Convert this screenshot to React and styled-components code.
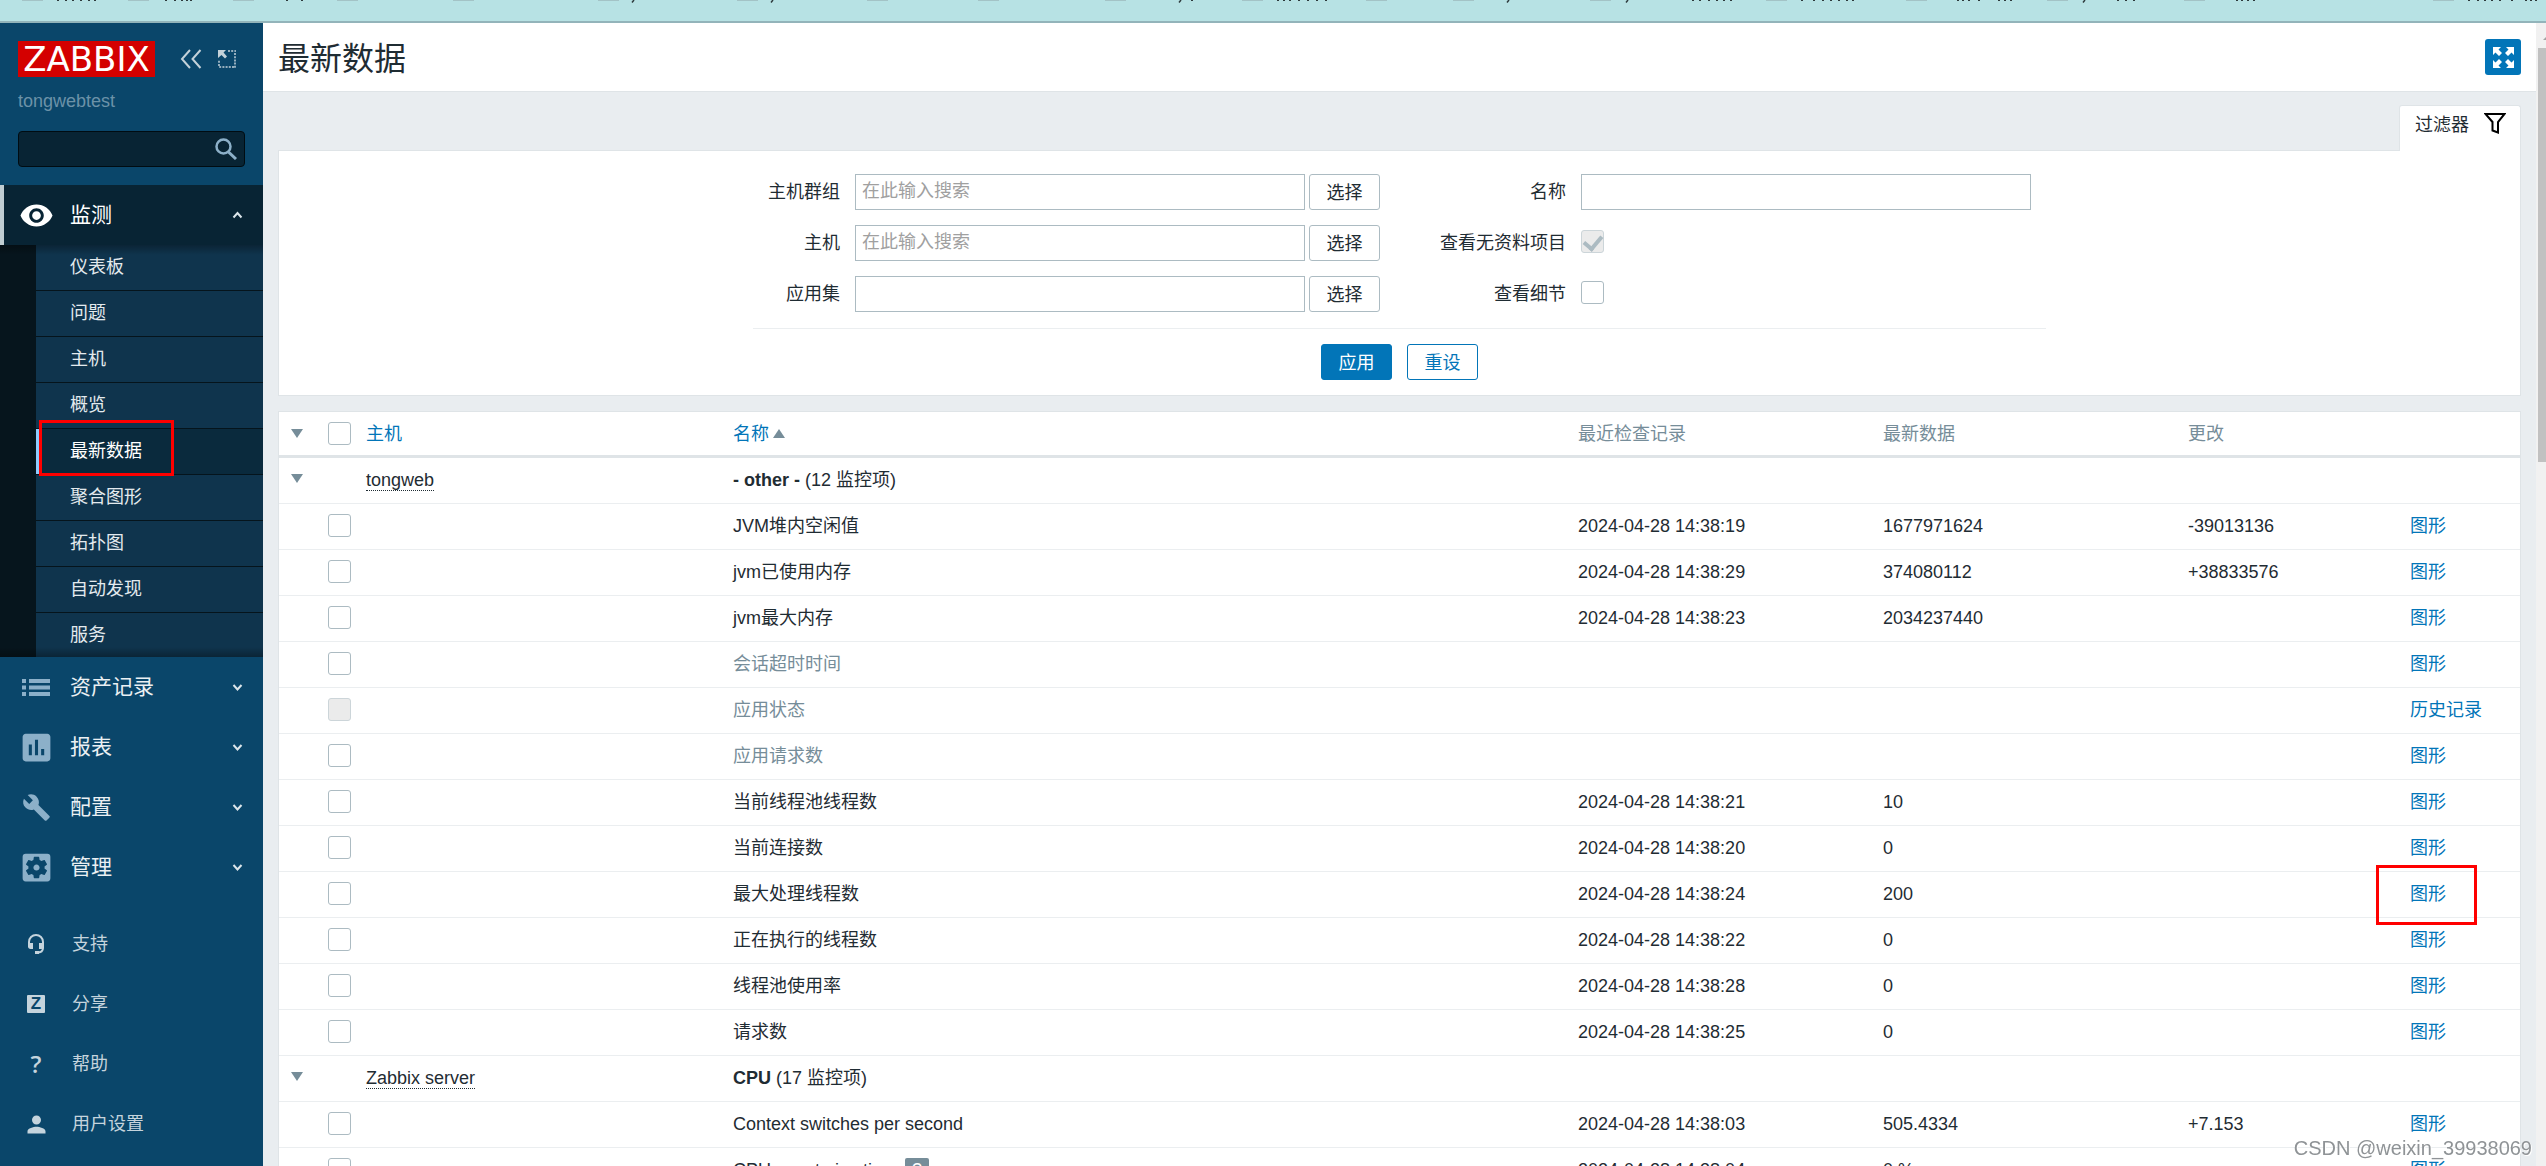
import React from 'react';
import styled, { createGlobalStyle } from 'styled-components';
import { MdVisibility, MdAssessment, MdBuild, MdSettingsApplications, MdPerson } from 'react-icons/md';

const GlobalStyle = createGlobalStyle`
  * {
    box-sizing: border-box;
  }

  body {
    margin: 0;
    background: #e9edf0;
    color: #1f2c33;
    font-family: "Liberation Sans", Arial, "Noto Sans CJK SC", sans-serif;
    font-size: 18px;
    line-height: 24px;
  }

  a {
    color: #0275b8;
    text-decoration: none;
  }

  button,
  input {
    font: inherit;
    margin: 0;
  }

  svg {
    display: block;
    flex: none;
  }
`

const Page = styled.div`
  display: flex;
  flex-direction: column;
  height: 100vh;
  overflow: hidden;
`

const BookmarkBar = styled.div`
  display: flex;
  flex: none;
  height: 23px;
  padding-left: 22px;
  overflow: hidden;
  background: #b7e2e4;
  border-bottom: 2px solid #93b4ba;
`

const Bookmark = styled.div`
  flex: none;
  width: ${props => props.$width}px;
`

const Window = styled.div`
  display: flex;
  flex: 1;
  min-height: 0;
`

/* sidebar */

const Sidebar = styled.aside`
  flex: none;
  width: 263px;
  background: #0a466a;
  overflow: hidden;
`

const Brand = styled.div`
  display: flex;
  align-items: center;
  padding: 18px 18px 0;
  color: #c3d1d9;
`

const Logo = styled.a`
  width: 137px;
  height: 36px;
  background: #d40000;
  color: #fff;
  font-family: "DejaVu Sans", sans-serif;
  font-size: 34px;
  line-height: 36px;
  text-align: center;
`

const BrandButton = styled.button`
  padding: 0;
  border: 0;
  background: none;
  color: inherit;
  margin-left: ${props => props.$gap}px;
`

const ServerName = styled.div`
  padding: 12px 18px 0;
  color: #6c92a8;
`

const Search = styled.form`
  display: flex;
  align-items: center;
  height: 36px;
  margin: 18px 18px;
  padding-right: 7px;
  background: #082434;
  border: 1px solid #000c12;
  border-radius: 4px;
  color: #8cb0c9;
`

const SearchInput = styled.input`
  flex: 1;
  min-width: 0;
  border: 0;
  background: none;
  color: #fff;
  outline: none;
`

const MenuItem = styled.a`
  display: flex;
  align-items: center;
  gap: 20px;
  height: 60px;
  padding: 0 20px 0 22px;
  color: ${props => props.$open ? '#fff' : '#ebf0f3'};
  font-size: 21px;
  background: ${props => props.$open ? '#082434' : 'none'};
  box-shadow: ${props => props.$open ? 'inset 4px 0 #c0cdd2' : 'none'};
`

const IconSlot = styled.span`
  display: flex;
  flex: none;
  justify-content: center;
  width: 28px;
  color: ${props => props.$color || '#8cb0c9'};

  svg {
    margin: 0 -4px;
  }
`

const MenuLabel = styled.span`
  flex: 1;
`

const Submenu = styled.div`
  padding-left: 36px;
  background:
    linear-gradient(rgba(0, 0, 0, 0.3), transparent 10px, transparent calc(100% - 10px), rgba(0, 0, 0, 0.3)),
    linear-gradient(90deg, #06151d 36px, #0f344d 36px);
`

const SubmenuItem = styled.a`
  display: block;
  position: relative;
  height: 46px;
  padding-left: 34px;
  border-bottom: 1px solid #05141c;
  color: #e3eaee;
  line-height: 45px;

  &:last-child {
    height: 44px;
    border-bottom: 0;
  }

  ${props => props.$active && `
    color: #fff;
    background: #0a2a3d;
    box-shadow: inset 3px 0 #8ecbff;
  `}
`

const FooterMenu = styled.div`
  margin-top: 17px;
`

const FooterItem = styled.a`
  display: flex;
  align-items: center;
  gap: 22px;
  height: 60px;
  padding: 0 22px;
  color: #c5d4dd;
`

const ShareMark = styled.span`
  width: 18px;
  height: 18px;
  border-radius: 1px;
  background: #c5d4dd;
  color: #0a466a;
  font-size: 17px;
  font-weight: bold;
  line-height: 18px;
  text-align: center;
`

const HelpMark = styled.span`
  font-family: "Open Sans", sans-serif;
  font-size: 24px;
  font-weight: 600;
`

const Highlight = styled.span`
  position: absolute;
  border: 3px solid #f00;
  pointer-events: none;
  top: ${props => props.$top}px;
  left: ${props => props.$left}px;
  width: ${props => props.$width}px;
  height: ${props => props.$height}px;
`

/* content */

const Content = styled.main`
  flex: 1;
  min-width: 0;
  overflow: hidden;
`

const Header = styled.header`
  display: flex;
  align-items: center;
  justify-content: space-between;
  height: 69px;
  padding: 0 15px;
  background: #fff;
  border-bottom: 1px solid #dfe4e7;
`

const Title = styled.h1`
  margin: 0;
  padding-top: 3px;
  font-size: 32px;
  line-height: 36px;
  font-weight: normal;
`

const FullscreenButton = styled.button`
  display: flex;
  align-items: center;
  justify-content: center;
  width: 36px;
  height: 36px;
  padding: 0;
  border: 0;
  border-radius: 3px;
  background: #0275b8;
  color: #fff;
`

const Body = styled.div`
  padding: 13px 15px 0;
`

const Tabs = styled.div`
  display: flex;
  justify-content: flex-end;
`

const FilterTab = styled.button`
  display: flex;
  gap: 15px;
  height: 46px;
  margin-bottom: -1px;
  padding: 7px 14px 0 15px;
  border: 1px solid #dfe4e7;
  border-bottom: 0;
  border-radius: 3px 3px 0 0;
  background: #fff;
  color: #1f2c33;
`

const FilterPanel = styled.form`
  display: flex;
  flex-direction: column;
  align-items: center;
  padding: 23px 0 15px;
  margin-bottom: 15px;
  background: #fff;
  border: 1px solid #dfe4e7;
`

const FilterColumns = styled.div`
  display: flex;
  gap: 60px;
  padding: 0 15px 16px;
  border-bottom: 1px solid #ebeef0;
`

const FilterColumn = styled.div`
  display: grid;
  grid-template-columns: auto auto;
  grid-auto-rows: 36px;
  gap: 15px;
  align-items: center;
`

const Label = styled.label`
  text-align: right;
`

const Field = styled.div`
  display: flex;
  gap: 4px;
`

const CheckField = styled.div`
  padding-bottom: 4px;
`

const TextInput = styled.input`
  width: 450px;
  height: 36px;
  padding: 0 6px 2px;
  border: 1px solid #acbbc2;
  outline: none;

  &::placeholder {
    color: #a0a0a0;
  }
`

const Button = styled.button`
  width: 71px;
  height: 36px;
  padding: 2px 0 0;
  border: 1px solid ${props => props.$primary || props.$outline ? '#0275b8' : '#acbbc2'};
  border-radius: 3px;
  background: ${props => props.$primary ? '#0275b8' : '#fff'};
  color: ${props => props.$primary ? '#fff' : props.$outline ? '#0275b8' : '#1f2c33'};
`

const FilterActions = styled.div`
  display: flex;
  gap: 15px;
  padding-top: 15px;
`

const Checkbox = styled.input.attrs({ type: 'checkbox' })`
  appearance: none;
  display: block;
  width: 23px;
  height: 23px;
  border: 1px solid #acbbc2;
  border-radius: 3px;
  background: #fff;

  &:disabled {
    background: #ebebeb;
    border-color: #ccd5d9;
  }

  &:checked::after {
    content: "";
    display: block;
    width: 8px;
    height: 14px;
    margin: 1px auto 0;
    border: solid #acbbc2;
    border-width: 0 4px 4px 0;
    transform: rotate(40deg);
  }
`

const Table = styled.table`
  width: 100%;
  table-layout: fixed;
  border-collapse: separate;
  border-spacing: 0;
  background: #fff;
  border: 1px solid #dfe4e7;
`

const Col = styled.col`
  width: ${props => props.$width}px;
`

const HeadCell = styled.th`
  height: 46px;
  padding: 0 8px;
  border-bottom: 3px solid #dfe4e7;
  color: #768d99;
  font-weight: normal;
  text-align: left;

  &:first-child {
    padding-left: 12px;
  }
`

const Cell = styled.td`
  height: 46px;
  padding: 0 8px 2px;
  border-bottom: 1px solid #ebeef0;
  white-space: nowrap;
  color: ${props => props.$muted ? '#768d99' : 'inherit'};

  &:first-child {
    padding-left: 12px;
    padding-bottom: 4px;
  }
`

const ActionWrap = styled.div`
  position: relative;
`

const HostLink = styled.a`
  display: inline-block;
  color: #1f2c33;
  line-height: 20px;
  border-bottom: 1px dotted #1f2c33;
`

const ToggleButton = styled.button`
  display: block;
  padding: 0;
  border: 0;
  background: none;
`

const SortLink = styled.a`
  display: inline-flex;
  align-items: center;
  gap: 4px;
`

const Hint = styled.span`
  display: inline-block;
  width: 24px;
  margin-left: 8px;
  border-radius: 2px;
  background: #768d99;
  color: #fff;
  text-align: center;
`

const Scrollbar = styled.div`
  flex: none;
  width: 10px;
  padding-left: 2px;
  background: #f1f1f1;
  overflow: hidden;
`

const ScrollArrow = styled.div`
  height: 25px;
  padding: 13px 0 0 5px;
`

const ScrollThumb = styled.div`
  height: 414px;
  background: #c1c1c1;
`

const Watermark = styled.div`
  position: fixed;
  right: 14px;
  bottom: 6px;
  color: #8f9396;
  font-size: 20px;
  text-shadow: 1px 1px 0 #fff;
`

const bookmarks = [
  { width: 106, marks: [35, 43, 50, 58, 66, 72] },
  { width: 105, marks: [37, 46, 53, 58, 62] },
  { width: 104, marks: [53, 68] },
  { width: 116, marks: [] },
  { width: 145, marks: [] },
  { width: 139, marks: [], tail: 34 },
  { width: 130, marks: [], tail: 34 },
  { width: 111, marks: [] },
  { width: 127, marks: [] },
  { width: 137, marks: [86], tail: 74 },
  { width: 124, marks: [35, 41, 47, 56, 65, 74, 83] },
  { width: 87, marks: [] },
  { width: 137, marks: [], tail: 54 },
  { width: 176, marks: [102, 109, 118, 126, 133, 140], tail: 36 },
  { width: 140, marks: [35, 47, 56, 64, 72, 80, 86] },
  { width: 141, marks: [51, 56, 62, 72, 92, 98, 104] },
  { width: 137, marks: [70, 78, 86], tail: 36 },
  { width: 249, marks: [52, 57, 63, 69] },
  { width: 113, marks: [35, 44, 51, 58, 66, 78, 92, 97, 102] },
];

const submenu = ['仪表板', '问题', '主机', '概览', '最新数据', '聚合图形', '拓扑图', '自动发现', '服务'];

const tongwebItems = [
  { name: 'JVM堆内空闲值', time: '2024-04-28 14:38:19', value: '1677971624', change: '-39013136' },
  { name: 'jvm已使用内存', time: '2024-04-28 14:38:29', value: '374080112', change: '+38833576' },
  { name: 'jvm最大内存', time: '2024-04-28 14:38:23', value: '2034237440' },
  { name: '会话超时时间' },
  { name: '应用状态', disabled: true, action: '历史记录' },
  { name: '应用请求数' },
  { name: '当前线程池线程数', time: '2024-04-28 14:38:21', value: '10' },
  { name: '当前连接数', time: '2024-04-28 14:38:20', value: '0' },
  { name: '最大处理线程数', time: '2024-04-28 14:38:24', value: '200', marked: true },
  { name: '正在执行的线程数', time: '2024-04-28 14:38:22', value: '0' },
  { name: '线程池使用率', time: '2024-04-28 14:38:28', value: '0' },
  { name: '请求数', time: '2024-04-28 14:38:25', value: '0' },
];

const serverItems = [
  { name: 'Context switches per second', time: '2024-04-28 14:38:03', value: '505.4334', change: '+7.153' },
  { name: 'CPU guest nice time', hint: true, time: '2024-04-28 14:38:04', value: '0 %' },
];

const Triangle = ({ up }) => (
  <svg width="12" height="9" viewBox="0 0 12 9" fill="#768d99">
    <path d={up ? 'M0 9h12L6 0z' : 'M0 0h12L6 9z'} />
  </svg>
)

const Chevron = ({ up }) => (
  <svg width="11" height="8" viewBox="0 0 11 8" fill="none" stroke="#dbe5ea" strokeWidth="2">
    <path d={up ? 'M1.5 6.5l4-4.5 4 4.5' : 'M1.5 2l4 4.5 4-4.5'} />
  </svg>
)

const CollapseIcon = () => (
  <svg width="22" height="20" viewBox="0 0 22 20" fill="none" stroke="currentColor" strokeWidth="2">
    <path d="M10 1L2 10l8 9M20.500 1l-8 9 8 9" />
  </svg>
)

const KioskIcon = () => (
  <svg width="18" height="18" viewBox="0 0 18 18" fill="currentColor">
    <path d="M0 0h8L5.500 2.500l3.500 4L7 8.500 3.500 5 0 8z" />
    <path d="M10 1h8M17 3v15M16 17H0M1 16v-6" fill="none" stroke="currentColor" strokeWidth="1.500" strokeDasharray="2 1.200" />
  </svg>
)

const SearchIcon = () => (
  <svg width="22" height="22" viewBox="0 0 22 22" fill="none" stroke="currentColor">
    <circle cx="8.500" cy="8.500" r="7" strokeWidth="2.500" />
    <path d="M13.500 14l7.500 7" strokeWidth="3" />
  </svg>
)

const ListIcon = () => (
  <svg width="28" height="17" viewBox="0 0 28 17" fill="currentColor">
    <path d="M0 0h4v4H0zM7 0h21v4H7zM0 6.500h4v4H0zM7 6.500h21v4H7zM0 13h4v4H0zM7 13h21v4H7z" />
  </svg>
)

const HeadsetIcon = () => (
  <svg width="18" height="20" viewBox="0 0 18 20">
    <path d="M2 13V8a7 7 0 0 1 14 0v6c0 3-2 4.500-6 4.500" fill="none" stroke="currentColor" strokeWidth="2" />
    <path d="M1 9h5v6H3.500C2 15 1 14 1 12.500zM12 9h5v3.500c0 1.500-1 2.500-2.500 2.500H12zM8 17h4v3H8z" fill="currentColor" />
  </svg>
)

const FullscreenIcon = () => (
  <svg width="21" height="21" viewBox="0 0 21 21" fill="currentColor">
    {[0, 90, 180, 270].map(angle => (
      <path key={angle} transform={`rotate(${angle} 10.5 10.5)`} d="M0 0h8L5.500 2.500 9 6 6 9 2.500 5.500 0 8z" />
    ))}
  </svg>
)

const FunnelIcon = () => (
  <svg width="22" height="21" viewBox="0 0 22 21" fill="none" stroke="#000" strokeWidth="2">
    <path d="M1.500 1h19l-6.500 8v10.500l-5.500-2V9z" />
  </svg>
)

const BookmarkRemnant = ({ width, marks, tail }) => (
  <Bookmark $width={width}>
    <svg width={width} height="4">
      <rect width="21" height="1" fill="#a3c3c6" />
      {marks.map(x => <rect key={x} x={x} width="2" height="1" fill="#2d3a3c" />)}
      {tail && <path d={`M${tail + 2} 0l-2 2.500`} stroke="#2d3a3c" strokeWidth="1.500" />}
    </svg>
  </Bookmark>
)

const ItemRow = ({ item }) => (
  <tr>
    <Cell />
    <Cell><Checkbox aria-label={item.name} disabled={item.disabled} /></Cell>
    <Cell />
    <Cell $muted={!item.time}>{item.name}{item.hint && <Hint>?</Hint>}</Cell>
    <Cell>{item.time}</Cell>
    <Cell>{item.value}</Cell>
    <Cell>{item.change}</Cell>
    <Cell>
      <ActionWrap>
        <a href="#">{item.action || '图形'}</a>
        {item.marked && <Highlight $top={-17} $left={-34} $width={101} $height={60} />}
      </ActionWrap>
    </Cell>
  </tr>
)

const GroupRow = ({ host, name, count }) => (
  <tr>
    <Cell><ToggleButton type="button" aria-label={host}><Triangle /></ToggleButton></Cell>
    <Cell />
    <Cell><HostLink href="#">{host}</HostLink></Cell>
    <Cell colSpan="5"><b>{name}</b> ({count} 监控项)</Cell>
  </tr>
)

class App extends React.Component {
  renderSidebar() {
    return (
      <Sidebar>
        <Brand>
          <Logo href="#">ZABBIX</Logo>
          <BrandButton type="button" $gap={25}><CollapseIcon /></BrandButton>
          <BrandButton type="button" $gap={16}><KioskIcon /></BrandButton>
        </Brand>
        <ServerName>tongwebtest</ServerName>
        <Search>
          <SearchInput type="text" aria-label="search" />
          <SearchIcon />
        </Search>
        <nav>
          <MenuItem href="#" $open>
            <IconSlot $color="#fff"><MdVisibility size={35} /></IconSlot>
            <MenuLabel>监测</MenuLabel>
            <Chevron up />
          </MenuItem>
          <Submenu>
            {submenu.map(name => (
              <SubmenuItem key={name} href="#" $active={name === '最新数据'}>
                {name}
                {name === '最新数据' && <Highlight $top={-9} $left={3} $width={135} $height={56} />}
              </SubmenuItem>
            ))}
          </Submenu>
          <MenuItem href="#">
            <IconSlot><ListIcon /></IconSlot>
            <MenuLabel>资产记录</MenuLabel>
            <Chevron />
          </MenuItem>
          <MenuItem href="#">
            <IconSlot><MdAssessment size={37} /></IconSlot>
            <MenuLabel>报表</MenuLabel>
            <Chevron />
          </MenuItem>
          <MenuItem href="#">
            <IconSlot><MdBuild size={29} /></IconSlot>
            <MenuLabel>配置</MenuLabel>
            <Chevron />
          </MenuItem>
          <MenuItem href="#">
            <IconSlot><MdSettingsApplications size={37} /></IconSlot>
            <MenuLabel>管理</MenuLabel>
            <Chevron />
          </MenuItem>
        </nav>
        <FooterMenu>
          <FooterItem href="#"><IconSlot $color="#c5d4dd"><HeadsetIcon /></IconSlot>支持</FooterItem>
          <FooterItem href="#"><IconSlot><ShareMark>Z</ShareMark></IconSlot>分享</FooterItem>
          <FooterItem href="#"><IconSlot $color="#c5d4dd"><HelpMark>?</HelpMark></IconSlot>帮助</FooterItem>
          <FooterItem href="#"><IconSlot $color="#c5d4dd"><MdPerson size={27} /></IconSlot>用户设置</FooterItem>
        </FooterMenu>
      </Sidebar>
    );
  }

  renderFilter() {
    return (
      <FilterPanel>
        <FilterColumns>
          <FilterColumn>
            <Label htmlFor="groups">主机群组</Label>
            <Field>
              <TextInput id="groups" type="text" placeholder="在此输入搜索" />
              <Button type="button">选择</Button>
            </Field>
            <Label htmlFor="hosts">主机</Label>
            <Field>
              <TextInput id="hosts" type="text" placeholder="在此输入搜索" />
              <Button type="button">选择</Button>
            </Field>
            <Label htmlFor="application">应用集</Label>
            <Field>
              <TextInput id="application" type="text" />
              <Button type="button">选择</Button>
            </Field>
          </FilterColumn>
          <FilterColumn>
            <Label htmlFor="name">名称</Label>
            <Field><TextInput id="name" type="text" /></Field>
            <Label htmlFor="without-data">查看无资料项目</Label>
            <CheckField><Checkbox id="without-data" defaultChecked disabled /></CheckField>
            <Label htmlFor="details">查看细节</Label>
            <CheckField><Checkbox id="details" /></CheckField>
          </FilterColumn>
        </FilterColumns>
        <FilterActions>
          <Button type="button" $primary>应用</Button>
          <Button type="button" $outline>重设</Button>
        </FilterActions>
      </FilterPanel>
    );
  }

  renderTable() {
    return (
      <Table>
        <colgroup>
          <Col $width={41} />
          <Col $width={38} />
          <Col $width={367} />
          <col />
          <Col $width={305} />
          <Col $width={305} />
          <Col $width={222} />
          <Col $width={118} />
        </colgroup>
        <thead>
          <tr>
            <HeadCell><ToggleButton type="button" aria-label="toggle"><Triangle /></ToggleButton></HeadCell>
            <HeadCell><Checkbox aria-label="all" /></HeadCell>
            <HeadCell><SortLink href="#">主机</SortLink></HeadCell>
            <HeadCell><SortLink href="#">名称<Triangle up /></SortLink></HeadCell>
            <HeadCell>最近检查记录</HeadCell>
            <HeadCell>最新数据</HeadCell>
            <HeadCell>更改</HeadCell>
            <HeadCell />
          </tr>
        </thead>
        <tbody>
          <GroupRow host="tongweb" name="- other -" count={12} />
          {tongwebItems.map(item => <ItemRow key={item.name} item={item} />)}
          <GroupRow host="Zabbix server" name="CPU" count={17} />
          {serverItems.map(item => <ItemRow key={item.name} item={item} />)}
        </tbody>
      </Table>
    );
  }

  render() {
    return (
      <Page>
        <GlobalStyle />
        <BookmarkBar>
          {bookmarks.map((bookmark, i) => <BookmarkRemnant key={i} {...bookmark} />)}
        </BookmarkBar>
        <Window>
          {this.renderSidebar()}
          <Content>
            <Header>
              <Title>最新数据</Title>
              <FullscreenButton type="button"><FullscreenIcon /></FullscreenButton>
            </Header>
            <Body>
              <Tabs>
                <FilterTab type="button">过滤器<FunnelIcon /></FilterTab>
              </Tabs>
              {this.renderFilter()}
              {this.renderTable()}
            </Body>
          </Content>
          <Scrollbar>
            <ScrollArrow>
              <svg width="8" height="4" viewBox="0 0 8 4" fill="#a3a3a3"><path d="M0 4h8L4 0z" /></svg>
            </ScrollArrow>
            <ScrollThumb />
          </Scrollbar>
        </Window>
        <Watermark>CSDN @weixin_39938069</Watermark>
      </Page>
    );
  }
}

export default App;
